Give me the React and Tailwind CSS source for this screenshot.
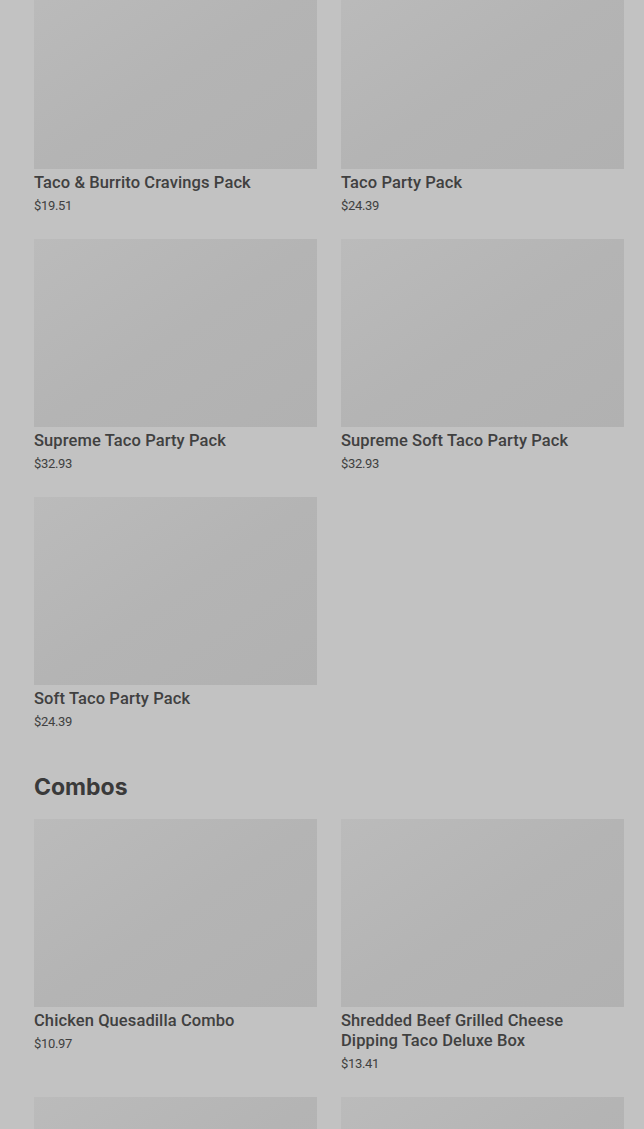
import React from 'react';

const packs = [
  { name: 'Taco & Burrito Cravings Pack', price: '$19.51' },
  { name: 'Taco Party Pack', price: '$24.39' },
  { name: 'Supreme Taco Party Pack', price: '$32.93' },
  { name: 'Supreme Soft Taco Party Pack', price: '$32.93' },
  { name: 'Soft Taco Party Pack', price: '$24.39' },
];

const combos = [
  { name: 'Chicken Quesadilla Combo', price: '$10.97' },
  { name: 'Shredded Beef Grilled Cheese Dipping Taco Deluxe Box', price: '$13.41' },
  { name: '', price: '' },
  { name: '', price: '' },
];

const font = { fontFamily: 'Roboto, "Liberation Sans", sans-serif' };

const ProductCard = ({ item }) => (
  <div className="flex flex-col">
    {/* Image placeholder */}
    <div className="h-[188px] w-full bg-gradient-to-br from-[#bbbbbb] via-[#b4b4b4] to-[#b1b1b1]" />
    {item.name && (
      <>
        <h3 className="mt-1 pr-10 text-[16.5px] font-medium leading-5 tracking-[0.1px] text-[#404040]" style={font}>
          {item.name}
        </h3>
        <p className="mt-1 text-[13px] leading-[18px] tracking-tight text-[#404040]" style={font}>
          {item.price}
        </p>
      </>
    )}
  </div>
);

const ProductGrid = ({ items }) => (
  <div className="grid grid-cols-2 gap-x-6 gap-y-[24px]">
    {items.map((item, i) => (
      <ProductCard key={i} item={item} />
    ))}
  </div>
);

export default function App() {
  return (
    <div className="h-[1129px] overflow-hidden bg-[#c2c2c2]">
      <div className="-mt-[19px] pl-[34px] pr-5 pb-10">
        <ProductGrid items={packs} />

        {/* Combos section */}
        <h2
          className="mt-10 text-[23px] font-bold leading-8 text-[#3a3a3a]"
          style={{ fontFamily: 'Inter, "Liberation Sans", sans-serif' }}
        >
          Combos
        </h2>
        <div className="mt-4">
          <ProductGrid items={combos} />
        </div>
      </div>
    </div>
  );
}
